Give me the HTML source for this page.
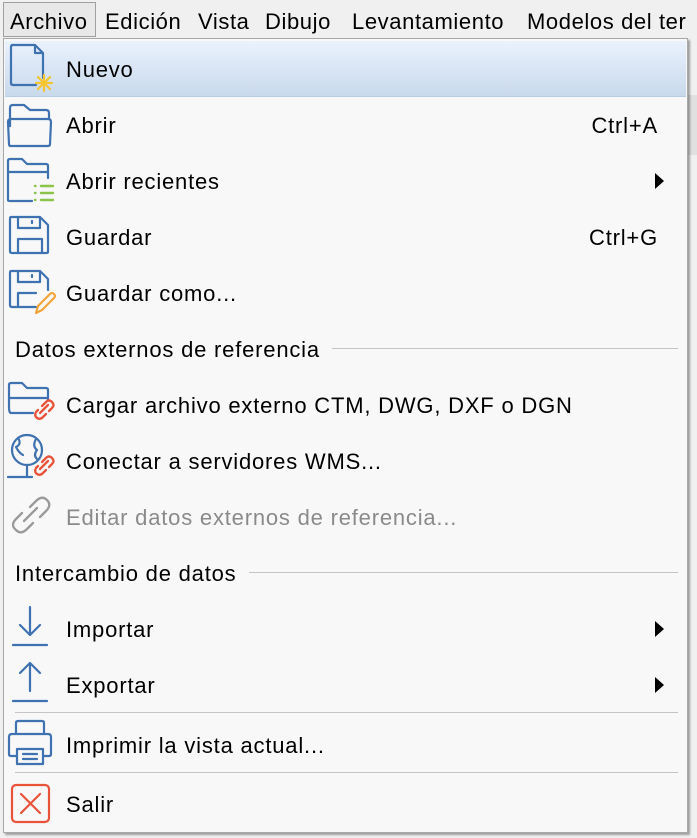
<!DOCTYPE html>
<html><head><meta charset="utf-8"><style>
*{margin:0;padding:0;box-sizing:border-box}
body{width:697px;height:838px;background:#f0f0f0;position:relative;overflow:hidden;font-family:"Liberation Sans",sans-serif;color:#000}
.bar{position:absolute;top:0;left:0;width:697px;height:38px;background:#f0f0f0}
.mb{position:absolute;top:9px;font-size:22px;line-height:26px;letter-spacing:0.6px}
.sel{position:absolute;left:3px;top:2px;width:93px;height:35px;border:1px solid #a0a0a0;background:#e8e8e8}
.menu{position:absolute;left:3px;top:38px;width:685px;height:795px;background:#f8f8f8;border:1px solid #a8a8a8;box-shadow:2px 2px 2px rgba(0,0,0,.35)}
.hl{position:absolute;left:1px;top:2px;width:681px;height:56px;background:linear-gradient(#eaf2fd,#c9d9ec);border-bottom:1px solid #b8cce4}
.t{position:absolute;left:62px;font-size:22px;line-height:26px;white-space:nowrap;letter-spacing:0.8px}
.h{position:absolute;left:11px;font-size:22px;line-height:26px;white-space:nowrap;letter-spacing:0.8px}
.k{position:absolute;right:29px;font-size:22px;line-height:26px;letter-spacing:0.8px}
.ar{position:absolute;left:651px;width:0;height:0;border-left:9px solid #000;border-top:8px solid transparent;border-bottom:8px solid transparent}
.ln{position:absolute;height:1px;background:#c4c4c4}
svg{position:absolute}
.dis{color:#8a8a8a}
</style></head><body>
<div class="bar"></div>
<div style="position:absolute;left:688px;top:95px;width:9px;height:60px;background:#e0e0e0"></div>
<div class="sel"></div>
<div class="mb" style="left:10px">Archivo</div>
<div class="mb" style="left:105px">Edición</div>
<div class="mb" style="left:198px">Vista</div>
<div class="mb" style="left:265px">Dibujo</div>
<div class="mb" style="left:352px">Levantamiento</div>
<div class="mb" style="left:527px">Modelos del ter</div>
<div class="menu">
<div class="hl"></div>
<div class="t" style="top:18px">Nuevo</div>
<div class="t" style="top:74px">Abrir</div><div class="k" style="top:74px">Ctrl+A</div>
<div class="t" style="top:130px">Abrir recientes</div><div class="ar" style="top:134px"></div>
<div class="t" style="top:186px">Guardar</div><div class="k" style="top:186px">Ctrl+G</div>
<div class="t" style="top:242px">Guardar como...</div>
<div class="h" style="top:298px">Datos externos de referencia</div><div class="ln" style="left:328px;width:346px;top:309px"></div>
<div class="t" style="top:354px">Cargar archivo externo CTM, DWG, DXF o DGN</div>
<div class="t" style="top:410px">Conectar a servidores WMS...</div>
<div class="t dis" style="top:466px">Editar datos externos de referencia...</div>
<div class="h" style="top:522px">Intercambio de datos</div><div class="ln" style="left:245px;width:429px;top:533px"></div>
<div class="t" style="top:578px">Importar</div><div class="ar" style="top:582px"></div>
<div class="t" style="top:634px">Exportar</div><div class="ar" style="top:638px"></div>
<div class="ln" style="left:11px;width:663px;top:673px"></div>
<div class="t" style="top:694px">Imprimir la vista actual...</div>
<div class="ln" style="left:11px;width:663px;top:733px"></div>
<div class="t" style="top:753px">Salir</div>
</div>
<svg width="60" height="838" style="left:0;top:0" fill="none" stroke="#3f72b0" stroke-width="2.2" stroke-linejoin="round" stroke-linecap="round">
<path d="M12 45H35L43 53V78M36 85H13Q11 85 11 83V47Q11 45 13 45M35 45V53H43"/>
<g stroke="#f5c431"><path d="M44 75V91M36 83H52M38 77L50 89M50 77L38 89"/></g>
<path d="M10 126V108Q10 105 13 105H24L30 110H46Q49 110 49 113V119M10 146H48Q50 146 50 144L51 122Q51 119 48 119H11Q8 119 8 122L9 144Q9 146 11 146Z"/>
<path d="M8 200V161Q8 159 10 159H22L27 164H46Q48 164 48 166V178M8 172H48M8 200Q8 201 10 201H32"/>
<g stroke="#8cc34a" stroke-width="2.4"><path d="M35 186h.5M41 186h12M35 193h.5M41 193h12M35 200h.5M41 200h12"/></g>
<path d="M11 217H40L48 225V252Q48 253 46 253H12Q10 253 10 251V219Q10 217 11 217ZM18 217V228H40V217M18 253V239H42V253M32 221V223"/>
<path d="M48 290V279L40 271H11Q10 271 10 273V305Q10 307 12 307H36M18 271V282H40V271M18 307V293H36M32 275V277"/>
<path stroke="#f4a43a" d="M36 313L38 306L50 294Q52 292 54 294Q56 296 54 298L42 310Z"/>
<path d="M9 407V385Q9 383 11 383H22L27 388H46Q48 388 48 390V400M9 398H48M9 407Q9 413 11 413H33"/>
<g stroke="#e8533a" stroke-width="2.3"><path d="M38 410L36 412Q34 416 37 418Q40 420 43 417L46 414M42 406L46 402Q49 399 52 402Q55 405 52 408L49 411M40 413L48 405"/></g>
<circle cx="27" cy="450" r="15"/><path d="M27 465V477M8 477H32M18 438Q22 444 16 447Q19 453 23 455M36 439Q32 446 37 450Q33 455 37 459"/>
<g stroke="#e8533a" stroke-width="2.3"><path d="M38 466L36 468Q34 472 37 474Q40 476 43 473L46 470M42 462L46 458Q49 455 52 458Q55 461 52 464L49 467M40 469L48 461"/></g>
<g stroke="#9a9a9a" stroke-width="2.3"><path d="M22 513L16 519Q10 525 16 530Q21 535 27 529L33 523M30 507L36 501Q42 495 47 500Q52 505 46 511L40 517M24 521L37 508"/></g>
<path d="M30 607V635M20 625L30 635L40 625M13 645H47"/>
<path d="M30 663V691M20 673L30 663L40 673M13 701H47"/>
<path d="M16 734V723Q16 721 18 721H42Q44 721 44 723V734M16 756H11Q9 756 9 754V737Q9 734 12 734H48Q51 734 51 737V754Q51 756 49 756H44M17 749H43V764H17ZM23 754H37M23 759H37"/>
<rect x="12" y="785" width="37" height="37" rx="4" stroke="#e8533a"/><path stroke="#e8533a" d="M21 794L40 813M40 794L21 813"/>
</svg>
</body></html>
